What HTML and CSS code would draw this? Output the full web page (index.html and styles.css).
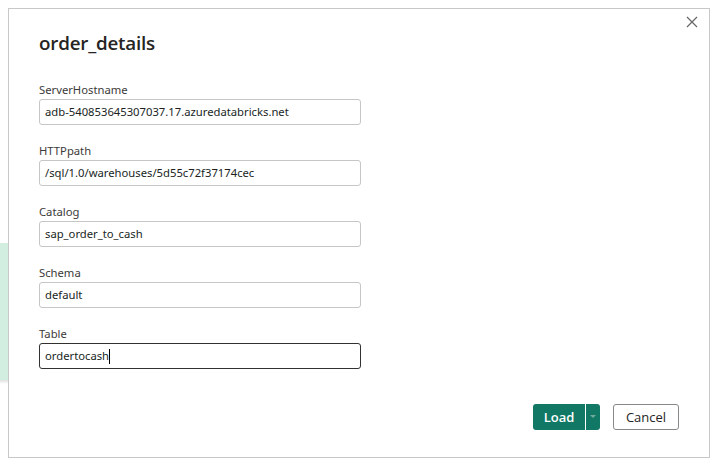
FILE: index.html
```html
<!DOCTYPE html>
<html lang="en">
<head>
<meta charset="utf-8">
<title>order_details</title>
<link rel="stylesheet" href="styles.css">
</head>
<body>
<div class="page">
  <div class="backdrop">
    <div class="strip"></div>
    <div class="strip-edge"></div>
  </div>
  <div class="dialog">
    <div class="dialog-head">
      <h1 class="title">order_details</h1>
      <button class="close" aria-label="Close">
        <svg width="12" height="12" viewBox="0 0 12 12"><path d="M1 1 L11 11 M11 1 L1 11" stroke="#666" stroke-width="1.2" fill="none"/></svg>
      </button>
    </div>
    <div class="fields">
      <div class="field">
        <label class="label">ServerHostname</label>
        <div class="input">adb-540853645307037.17.azuredatabricks.net</div>
      </div>
      <div class="field">
        <label class="label">HTTPpath</label>
        <div class="input">/sql/1.0/warehouses/5d55c72f37174cec</div>
      </div>
      <div class="field">
        <label class="label">Catalog</label>
        <div class="input">sap_order_to_cash</div>
      </div>
      <div class="field">
        <label class="label">Schema</label>
        <div class="input">default</div>
      </div>
      <div class="field">
        <label class="label">Table</label>
        <div class="input input-active">ordertocash<span class="caret"></span></div>
      </div>
    </div>
    <div class="actions">
      <div class="split">
        <button class="btn-primary">Load</button>
        <button class="btn-drop" aria-label="More">
          <svg width="6" height="4" viewBox="0 0 6 4"><path d="M0 0 L6 0 L3 3 Z" fill="#6fa89b"/></svg>
        </button>
      </div>
      <button class="btn-secondary">Cancel</button>
    </div>
  </div>
</div>
</body>
</html>
```
FILE: styles.css
```css
* { box-sizing: border-box; }
html, body { margin: 0; padding: 0; background: #ffffff; }
body {
  font-family: "Noto Sans", "Open Sans", sans-serif;
  color: #252423;
}
.page {
  display: flex;
  padding-top: 8px;
  width: 718px;
  height: 466px;
}
.backdrop {
  width: 8px;
  display: flex;
  flex-direction: column;
  padding-top: 235px;
}
.strip {
  height: 137px;
  background: #d2eee0;
}
.strip-edge {
  height: 4px;
  background: linear-gradient(#e0e0e0, #ffffff);
}
.dialog {
  width: 702px;
  height: 450px;
  border: 1px solid #c8c8c8;
  background: #fff;
  padding: 0 30px 0 30px;
  display: flex;
  flex-direction: column;
}
.dialog-head {
  display: flex;
  justify-content: space-between;
  align-items: flex-start;
  height: 72px;
}
.title {
  margin: 21px 0 0 0;
  font-family: "Open Sans", sans-serif;
  font-weight: 600;
  font-size: 18.8px;
  line-height: 26px;
  color: #252423;
  letter-spacing: -0.2px;
}
.close {
  margin: 7px -19px 0 0;
  padding: 0;
  border: 0;
  background: transparent;
  width: 12px;
  height: 12px;
  display: flex;
}
.fields {
  display: flex;
  flex-direction: column;
  gap: 17px;
}
.field {
  display: flex;
  flex-direction: column;
  gap: 1px;
}
.label {
  font-size: 11.25px;
  line-height: 17px;
  color: #3b3a39;
}
.input {
  width: 322px;
  height: 26px;
  border: 1px solid #c8c6c4;
  border-radius: 3px;
  padding: 0 5px;
  font-size: 11.25px;
  line-height: 24px;
  color: #201f1e;
  display: flex;
  align-items: center;
}
.input-active {
  border-color: #323130;
}
.caret {
  display: inline-block;
  width: 1px;
  height: 15px;
  background: #000;
}
.actions {
  margin-top: auto;
  margin-bottom: 27px;
  display: flex;
  justify-content: flex-end;
  gap: 13px;
  margin-right: 0;
}
.split {
  display: flex;
  gap: 1px;
}
.btn-primary {
  width: 52px;
  height: 26px;
  border: 0;
  border-radius: 3px 0 0 3px;
  background: #117865;
  color: #fff;
  font-family: "Open Sans", sans-serif;
  font-weight: 600;
  font-size: 13px;
  padding: 0;
}
.btn-drop {
  width: 14px;
  height: 26px;
  border: 0;
  border-radius: 0 3px 3px 0;
  background: #117865;
  padding: 0;
  display: flex;
  align-items: center;
  justify-content: center;
}
.btn-secondary {
  width: 66px;
  height: 26px;
  border: 1px solid #8a8886;
  border-radius: 3px;
  background: #fff;
  color: #252423;
  font-family: "Open Sans", sans-serif;
  font-size: 13px;
  padding: 0;
}
```
